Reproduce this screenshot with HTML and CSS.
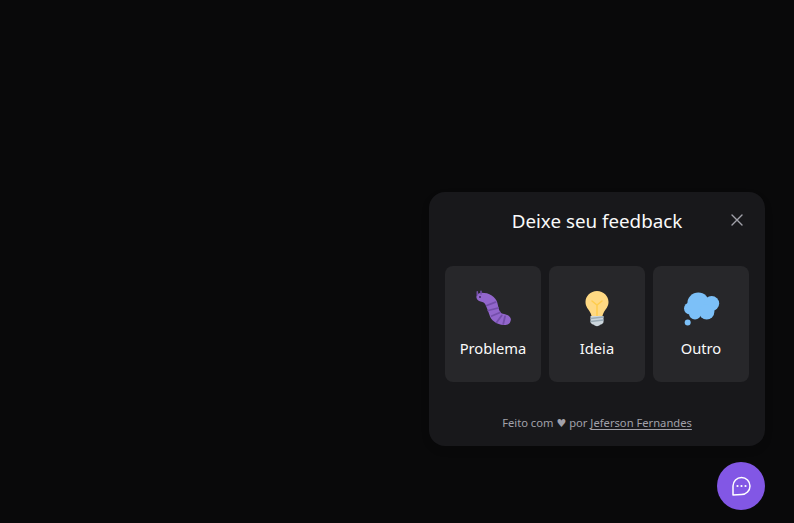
FILE: index.html
```html
<!DOCTYPE html>
<html lang="pt-BR">
<head>
    <meta charset="UTF-8" />
    <meta name="viewport" content="width=device-width, initial-scale=1.0" />
    <title>Feedback</title>
    <link rel="stylesheet" href="styles.css">
</head>
<body>

<div class="widget">
    <div class="card">
        <header class="card-header">
            <h2>Deixe seu feedback</h2>
            <button class="close-btn" type="button" aria-label="Fechar">
                <svg width="16" height="16" viewBox="0 0 16 16" fill="none" stroke="currentColor" stroke-width="1.4" stroke-linecap="round">
                    <path d="M3 3 L13 13 M13 3 L3 13" />
                </svg>
            </button>
        </header>

        <div class="options">
            <button class="option" type="button">
                <svg class="option-icon" width="40" height="40" viewBox="0 0 40 40">
                    <path d="M8.7 2.8 C12 2.8 16 3.5 18.7 5.5 C21.5 7.5 23.5 10 24.2 12.2 C25.3 15.5 25.5 20 27.5 22.2 C29 24.2 33 24 35.3 25.5 C37.5 27 38.3 29 37.7 30.5 C37.3 33 35.7 34.5 33.7 34.8 C31 35.3 28 35 25 33.8 C22 32.5 19.8 31 18.2 28.8 C16.5 26 16 23 14.8 20.5 C13.8 18 13 15 11.5 13.2 C10 11.8 7 11.8 5.3 10.5 C3.5 9 3 7 3.7 5.5 C4.5 3.8 6.5 3 8.7 2.8 Z" fill="#9266cc" />
                    <path d="M4.3 5 L4.3 1.8 M8 4 L8 1.2" fill="none" stroke="#744eaa" stroke-width="1.6" stroke-linecap="round" />
                    <g fill="none" stroke="#744eaa" stroke-width="1.8" stroke-linecap="round">
                        <path d="M13.7 15.5 L22.5 12.2" />
                        <path d="M15.3 20.5 L25 18" />
                        <path d="M18.7 26 L27 22.5" />
                        <path d="M23.7 32.2 L28.7 25.5" />
                        <path d="M30.3 33.8 L32 26.5" />
                    </g>
                    <circle cx="7" cy="7" r="1" fill="#3d2a5c" />
                </svg>
                <span>Problema</span>
            </button>

            <button class="option" type="button">
                <svg class="option-icon" width="40" height="40" viewBox="0 0 40 40">
                    <g transform="translate(0 -2)">
                        <path d="M20 3 C26.5 3 31.5 8 31.5 14 C31.5 19 28.5 21 26.5 25 C25.8 26.5 25.5 27.5 25.5 28 L14.5 28 C14.5 27.5 14.2 26.5 13.5 25 C11.5 21 8.5 19 8.5 14 C8.5 8 13.5 3 20 3 Z" fill="#ffd983" />
                        <path d="M15 13 L20 17 L25 13 M20 17 L20 27.5" fill="none" stroke="#ffcc4d" stroke-width="1.5" stroke-linecap="round" />
                        <path d="M13.5 28 L26.5 28 L26.5 34 C26.5 35.5 24.5 36.5 23 36.8 C22.3 37.8 21.2 38.2 20 38.2 C18.8 38.2 17.7 37.8 17 36.8 C15.5 36.5 13.5 35.5 13.5 34 Z" fill="#ccd6dd" />
                        <path d="M13.5 30.5 L26.5 29 M13.5 33.5 L26.5 32" fill="none" stroke="#99aab5" stroke-width="1.3" />
                    </g>
                </svg>
                <span>Ideia</span>
            </button>

            <button class="option" type="button">
                <svg class="option-icon" width="40" height="40" viewBox="0 0 40 40">
                    <g fill="#7cc0f8">
                        <circle cx="9" cy="18.5" r="6" />
                        <circle cx="17.3" cy="13.5" r="11" />
                        <circle cx="30.7" cy="13.5" r="7.5" />
                        <circle cx="25.7" cy="21.8" r="7.7" />
                        <circle cx="14" cy="23.5" r="6" />
                        <circle cx="6.7" cy="32.5" r="3" />
                    </g>
                </svg>
                <span>Outro</span>
            </button>
        </div>

        <footer class="card-footer">
            Feito com <span class="heart">♥</span> por <a href="#">Jeferson Fernandes</a>
        </footer>
    </div>

    <button class="chat-btn" type="button" aria-label="Feedback">
        <svg width="24" height="24" viewBox="0 0 24 24" fill="none" stroke="currentColor" stroke-width="1.5" stroke-linejoin="round">
            <path d="M4 21 L4 12 A8.5 8.5 0 1 1 12.5 20.5 Z" />
            <g fill="currentColor" stroke="none">
                <circle cx="8.5" cy="12" r="1.1" />
                <circle cx="12.5" cy="12" r="1.1" />
                <circle cx="16.5" cy="12" r="1.1" />
            </g>
        </svg>
    </button>
</div>

</body>
</html>
```

FILE: styles.css
```css
html, body {
    height: 100%;
}

body {
    font-family: "Noto Sans", Arial, sans-serif;
    background-color: #09090a;
    color: #f4f4f5;
    margin: 0;
    overflow: hidden;
}

.widget {
    height: 100%;
    box-sizing: border-box;
    padding: 0 29px 13px 0;
    display: flex;
    flex-direction: column;
    align-items: flex-end;
    justify-content: flex-end;
    gap: 16px;
}

.card {
    background-color: #18181b;
    border-radius: 16px;
    box-shadow: 0 4px 8px rgba(0, 0, 0, 0.1);
    width: 336px;
    height: 254px;
    box-sizing: border-box;
    padding: 16px;
    display: flex;
    flex-direction: column;
}

.card-header {
    display: flex;
    justify-content: center;
    align-items: center;
    height: 26px;
    position: relative;
}

h2 {
    margin: 0;
    font-size: 18.8px;
    font-weight: 400;
    line-height: 26px;
    color: #fafafa;
}

.close-btn {
    position: absolute;
    top: 4px;
    right: 4px;
    width: 16px;
    height: 16px;
    padding: 0;
    border: none;
    background: none;
    color: #a1a1aa;
    cursor: pointer;
    display: flex;
}

.options {
    display: flex;
    gap: 8px;
    margin-top: 32px;
}

.option {
    width: 96px;
    height: 116px;
    padding: 0;
    border: none;
    border-radius: 8px;
    background-color: #27272a;
    color: #fafafa;
    font-family: inherit;
    font-size: 14.7px;
    display: flex;
    flex-direction: column;
    align-items: center;
    justify-content: center;
    gap: 8px;
    cursor: pointer;
}

.option-icon {
    display: block;
}

.card-footer {
    margin-top: 33px;
    text-align: center;
    font-size: 11.2px;
    line-height: 16px;
    color: #a1a1aa;
}

.heart {
    font-family: "DejaVu Sans", sans-serif;
    font-size: 11px;
    line-height: 1;
}

.card-footer a {
    color: #a1a1aa;
    text-underline-offset: 2px;
}

.chat-btn {
    width: 48px;
    height: 48px;
    padding: 0;
    border: none;
    border-radius: 50%;
    background-color: #8257e5;
    color: #ffffff;
    display: flex;
    align-items: center;
    justify-content: center;
    cursor: pointer;
}
```
